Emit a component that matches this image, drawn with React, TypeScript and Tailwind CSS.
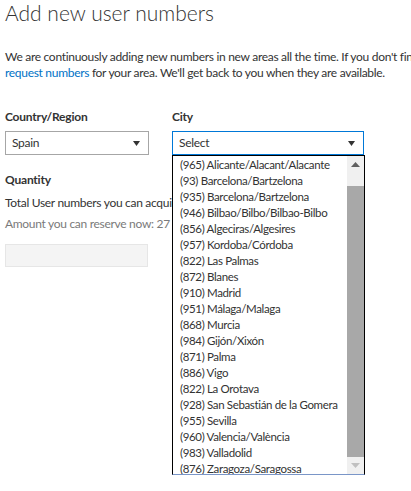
import React from "react";

const cities = [
  "(965) Alicante/Alacant/Alacante",
  "(93) Barcelona/Bartzelona",
  "(935) Barcelona/Bartzelona",
  "(946) Bilbao/Bilbo/Bilbao-Bilbo",
  "(856) Algeciras/Algesires",
  "(957) Kordoba/Córdoba",
  "(822) Las Palmas",
  "(872) Blanes",
  "(910) Madrid",
  "(951) Málaga/Malaga",
  "(868) Murcia",
  "(984) Gijón/Xixón",
  "(871) Palma",
  "(886) Vigo",
  "(822) La Orotava",
  "(928) San Sebastián de la Gomera",
  "(955) Sevilla",
  "(960) Valencia/València",
  "(983) Valladolid",
  "(876) Zaragoza/Saragossa",
];

function Caret() {
  return (
    <svg width="7" height="5" viewBox="0 0 7 5">
      <path d="M0 0H7L3.5 5Z" fill="#333" />
    </svg>
  );
}

export default function App() {
  return (
    <div
      className="relative w-[411px] h-[491px] overflow-hidden bg-white text-[#333333]"
      style={{ fontFamily: 'Lato, "Open Sans", sans-serif' }}
    >
      <h1 className="pl-[5px] pt-0 text-[21px] leading-[26px] font-light text-[#333333] whitespace-nowrap">
        Add new user numbers
      </h1>
      <div className="pl-[5px] mt-[23px] text-[12px] tracking-[-0.3px] leading-[16px] whitespace-nowrap">
        <div>We are continuously adding new numbers in new areas all the time. If you don't find</div>
        <div>
          <span className="text-[#0072c6]">request numbers</span> for your area. We'll get back to you when they are available.
        </div>
      </div>

      <div className="flex pl-[5px] mt-[28px] gap-[23px]">
        <div className="w-[144px] flex flex-col">
          <div className="text-[12px] tracking-[-0.2px] font-bold leading-[16px]">Country/Region</div>
          <div className="mt-[6px] h-[24px] border border-[#a6a6a6] flex items-center justify-between pl-[6px] pr-[8px] text-[12px] tracking-[-0.3px]">
            <span>Spain</span>
            <Caret />
          </div>
          <div className="mt-[17px] text-[12px] tracking-[-0.2px] font-bold leading-[16px]">Quantity</div>
          <div className="mt-[7px] text-[12px] tracking-[-0.3px] leading-[16px] whitespace-nowrap">Total User numbers you can acquire: 30</div>
          <div className="mt-[5px] text-[12px] tracking-[-0.3px] leading-[16px] whitespace-nowrap text-[#7a7a7a]">Amount you can reserve now: 27</div>
          <div className="mt-[12px] w-[143px] h-[23px] bg-[#f4f4f4] border border-[#e6e6e6]" />
        </div>
        <div className="relative w-[192px] flex flex-col">
          <div className="text-[12px] tracking-[-0.2px] font-bold leading-[16px]">City</div>
          <div className="mt-[6px] h-[24px] border border-[#0078d7] flex items-center justify-between pl-[6px] pr-[8px] text-[12px] tracking-[-0.3px] bg-white">
            <span>Select</span>
            <Caret />
          </div>
          <div className="absolute left-0 top-[46px] w-[193px] h-[320px] bg-white border border-black border-b-[#7a96c8] flex">
            <div className="flex-1 pl-[7px] pt-[1px] text-[11.5px] tracking-[-0.35px] leading-[16px] whitespace-nowrap overflow-hidden">
              {cities.map((c, i) => (
                <div key={i} className="h-[16px]">{c}</div>
              ))}
            </div>
            <div className="w-[17px] bg-[#f0f0f0] flex flex-col items-center">
              <div className="h-[17px] flex items-center justify-center">
                <svg width="9" height="5" viewBox="0 0 9 5"><path d="M0 5H9L4.5 0Z" fill="#606060" /></svg>
              </div>
              <div className="mt-[13px] w-[17px] h-[271px] bg-[#a8a8a8]" />
              <div className="flex-1 flex items-center justify-center">
                <svg width="9" height="5" viewBox="0 0 9 5"><path d="M0 0H9L4.5 5Z" fill="#c0c0c0" /></svg>
              </div>
            </div>
          </div>
        </div>
      </div>
    </div>
  );
}
